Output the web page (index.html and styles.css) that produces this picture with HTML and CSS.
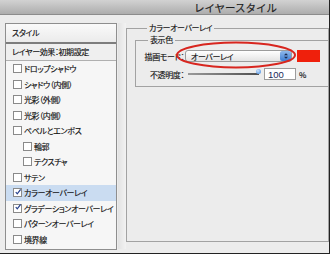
FILE: index.html
```html
<!DOCTYPE html>
<html lang="ja">
<head>
    <meta charset="UTF-8">
    <title>レイヤースタイル</title>
    <link rel="stylesheet" href="styles.css">
</head>
<body>
    <div class="window">
        <div class="titlebar">レイヤースタイル</div>
        <div class="content">
            <div class="side">
                <div class="side-head">スタイル</div>
                <div class="side-preset">レイヤー効果：初期設定</div>
                <div class="item"><span class="box"></span>ドロップシャドウ</div>
                <div class="item"><span class="box"></span>シャドウ（内側）</div>
                <div class="item"><span class="box"></span>光彩（外側）</div>
                <div class="item"><span class="box"></span>光彩（内側）</div>
                <div class="item"><span class="box"></span>ベベルとエンボス</div>
                <div class="item sub"><span class="box"></span>輪郭</div>
                <div class="item sub"><span class="box"></span>テクスチャ</div>
                <div class="item"><span class="box"></span>サテン</div>
                <div class="item selected"><span class="box checked"><svg viewBox="0 0 8 8"><path d="M1 4 L3 6.5 L7.5 0.5" /></svg></span>カラーオーバーレイ</div>
                <div class="item"><span class="box checked"><svg viewBox="0 0 8 8"><path d="M1 4 L3 6.5 L7.5 0.5" /></svg></span>グラデーションオーバーレイ</div>
                <div class="item"><span class="box"></span>パターンオーバーレイ</div>
                <div class="item"><span class="box"></span>境界線</div>
            </div>
            <div class="gutter"></div>
            <fieldset class="group">
                <legend>カラーオーバーレイ</legend>
                <fieldset class="subgroup">
                    <legend>表示色</legend>
                    <div class="row">
                        <div class="label">描画モード：</div>
                        <div class="select">
                            <span>オーバーレイ</span>
                            <span class="stepper"><svg viewBox="0 0 10 10"><path d="M2.5 4 L5 1.5 L7.5 4 Z M2.5 6 L5 8.5 L7.5 6 Z" /></svg></span>
                        </div>
                        <div class="swatch"></div>
                    </div>
                    <div class="row">
                        <div class="label">不透明度：</div>
                        <div class="slider"><span class="knob"></span></div>
                        <div class="field">100</div>
                        <div class="unit">%</div>
                    </div>
                </fieldset>
            </fieldset>
        </div>
        <svg class="mark" width="124" height="30" viewBox="0 0 124 30">
            <ellipse cx="62" cy="15" rx="59" ry="12.5" />
        </svg>
    </div>
</body>
</html>
```

FILE: styles.css
```css
body {
    margin: 0;
    background-color: #ececec;
    font-family: "Noto Sans CJK JP", "Noto Sans", sans-serif;
    font-size: 8px;
    font-feature-settings: "palt";
    letter-spacing: -0.4px;
    color: #111;
    -webkit-text-stroke: 0.15px #111;
}
.window {
    position: relative;
    width: 330px;
    height: 254px;
    box-sizing: border-box;
    border-right: 1px solid #222;
    border-bottom: 1px solid #222;
    overflow: hidden;
}
.titlebar {
    height: 15px;
    line-height: 15px;
    padding-left: 142px;
    text-align: center;
    font-size: 10.5px;
    font-feature-settings: normal;
    letter-spacing: 0;
    color: #222;
    background: linear-gradient(#d2d2d2, #adadad);
    border-bottom: 1px solid #8c8c8c;
    box-sizing: border-box;
}
.content {
    display: flex;
    align-items: flex-start;
    padding-left: 5px;
}
.side {
    width: 112px;
    height: 227px;
    margin-top: 8px;
    box-sizing: border-box;
    border: 1px solid #8e8e8e;
    background-color: #f6f6f6;
    flex-shrink: 0;
}
.side-head {
    height: 18px;
    line-height: 18px;
    padding-left: 6px;
    background: linear-gradient(#fafafa, #ebebeb);
    border-bottom: 2px solid #7d7d7d;
}
.side-preset {
    height: 16px;
    line-height: 16px;
    padding-left: 6px;
    background-color: #efefef;
    border-bottom: 1px solid #b0b0b0;
}
.item {
    display: flex;
    align-items: center;
    height: 15.5px;
    padding-left: 7px;
    white-space: nowrap;
}
.item.sub {
    padding-left: 17px;
}
.item.selected {
    background-color: #cadcf1;
}
.box {
    display: flex;
    align-items: center;
    justify-content: center;
    width: 7px;
    height: 7px;
    margin-right: 2px;
    border: 1px solid #8a8a8a;
    background-color: #fff;
    -webkit-text-stroke: 0;
}
.box.checked svg {
    width: 8px;
    height: 8px;
    margin-top: -2px;
    margin-left: 1px;
}
.box.checked path {
    fill: none;
    stroke: #26408c;
    stroke-width: 1.6;
}
.gutter {
    width: 8px;
    height: 226px;
    margin-top: 8px;
    margin-left: 1px;
    background: linear-gradient(90deg, #e2e2e2, #f2f2f2);
    flex-shrink: 0;
}
.group {
    margin: 7px 0 0 0;
    padding: 0 0 0 8px;
    width: 230px;
    height: 220px;
    border: 1px solid #a2a2a2;
    box-sizing: border-box;
    min-inline-size: 0;
}
legend {
    height: 12px;
    line-height: 12px;
    padding: 0 2px;
    margin-left: 12px;
}
.subgroup {
    margin: 0;
    padding: 4px 0 6px 4px;
    width: 220px;
    border: 1px solid #a2a2a2;
    box-sizing: border-box;
    min-inline-size: 0;
}
.subgroup legend {
    margin-left: 8px;
}
.row {
    display: flex;
    align-items: center;
    height: 12px;
}
.row + .row {
    margin-top: 6px;
}
.label {
    width: 44px;
    flex-shrink: 0;
    text-align: right;
    white-space: nowrap;
}
.select {
    display: flex;
    align-items: center;
    justify-content: space-between;
    width: 107px;
    height: 12px;
    margin-left: 1px;
    padding-left: 5px;
    box-sizing: border-box;
    border: 1px solid #9c9c9c;
    border-radius: 3px;
    background: linear-gradient(#ffffff, #e4e4e4);
}
.stepper {
    display: flex;
    align-items: center;
    justify-content: center;
    width: 11px;
    height: 10px;
    border-radius: 2px;
    background: linear-gradient(#8fb8ea, #3f7fd4);
}
.stepper svg {
    width: 8px;
    height: 8px;
}
.stepper path {
    fill: #1c2c50;
    stroke: none;
}
.swatch {
    width: 23px;
    height: 12px;
    margin-left: 5px;
    background-color: #ef200c;
}
.slider {
    position: relative;
    width: 71px;
    height: 2px;
    margin-left: 4px;
    background: linear-gradient(90deg, #9a9a9a, #4e4e4e);
}
.knob {
    position: absolute;
    right: -2px;
    top: -4px;
    width: 5px;
    height: 5px;
    border-radius: 50%;
    background: radial-gradient(circle at 40% 35%, #cfe3fb, #3a86e0);
}
.field {
    width: 32px;
    height: 12px;
    line-height: 12px;
    margin-left: 5px;
    padding-left: 3px;
    box-sizing: border-box;
    border: 1px solid #9c9c9c;
    background-color: #fff;
    color: #1a2a5a;
    font-family: "Liberation Sans", sans-serif;
    font-size: 9.5px;
    letter-spacing: 0;
    -webkit-text-stroke: 0;
}
.unit {
    margin-left: 3px;
    font-size: 8px;
}
.mark {
    position: absolute;
    left: 174px;
    top: 40px;
}
.mark ellipse {
    fill: none;
    stroke: #d8261f;
    stroke-width: 2;
}
```
